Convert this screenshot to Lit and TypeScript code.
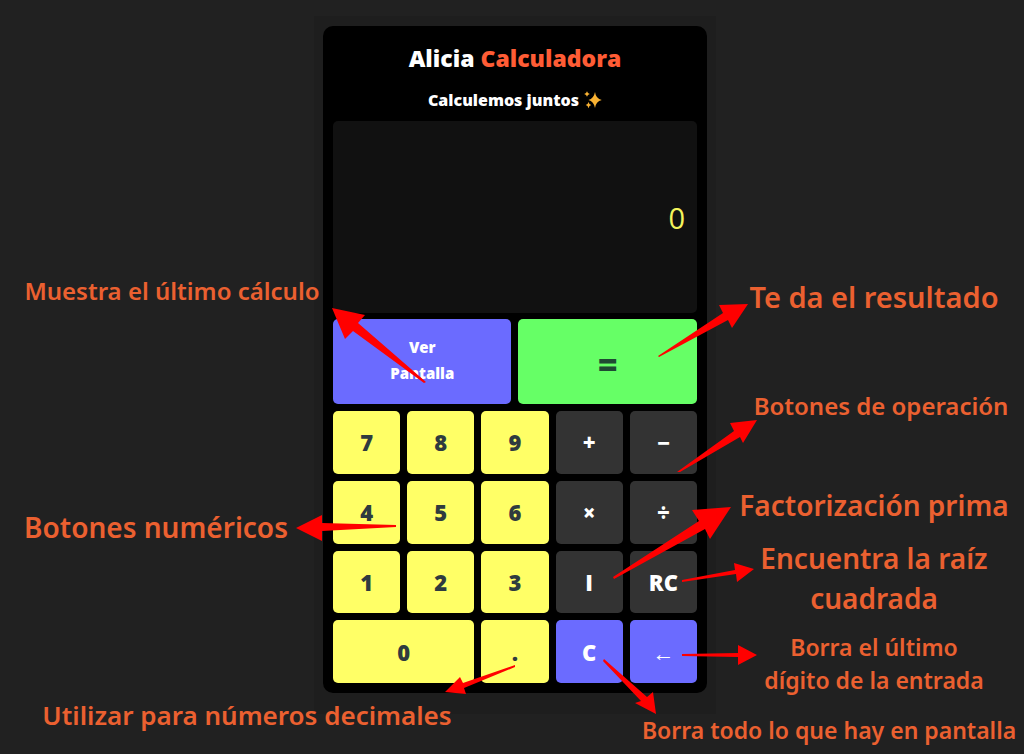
import { LitElement, html, svg, css } from "lit";
import { customElement, state } from "lit/decorators.js";

interface Note {
  lines: string[];
  x: number;
  y: number;
  size: "xs" | "s" | "m" | "l" | "xl";
}

interface Key {
  label: string;
  kind: string;
  name?: string;
}

// Note centres, measured from the top left corner of the annotated frame.
const NOTES: Note[] = [
  { lines: ["Muestra el último cálculo"], x: -142, y: 274, size: "s" },
  { lines: ["Te da el resultado"], x: 560, y: 281, size: "xl" },
  { lines: ["Botones de operación"], x: 567, y: 389, size: "s" },
  { lines: ["Factorización prima"], x: 560, y: 489, size: "l" },
  { lines: ["Encuentra la raíz", "cuadrada"], x: 560, y: 562, size: "l" },
  { lines: ["Borra el último", "dígito de la entrada"], x: 560, y: 648, size: "xs" },
  { lines: ["Borra todo lo que hay en pantalla"], x: 515, y: 714, size: "xs" },
  { lines: ["Utilizar para números decimales"], x: -67, y: 699, size: "m" },
  { lines: ["Botones numéricos"], x: -158, y: 511, size: "l" },
];

// Arrow outlines in the same coordinate system as the notes.
const ARROWS: string[] = [
  "M112 366L110 367L39 315L31 323L18 292L51 299L44 307Z",
  "M344 340L345 341L414 304L418 312L434 288L405 289L409 297Z",
  "M363 456L366 456L426 421L429 427L443 404L416 407L420 415Z",
  "M299 561L300 563L391 513L396 523L417 491L378 494L385 505Z",
  "M368 564L368 566L422 558L423 566L440 553L420 547L421 554Z",
  "M368 638L368 640L424 641L424 649L443 639L424 629L424 637Z",
  "M290 643L289 645L327 685L321 687L342 698L339 676L333 681Z",
  "M201 649L201 651L150 672L152 678L131 676L146 661L149 667Z",
  "M82 509L82 511L8 515L8 525L-18 512L8 499L8 507Z",
];

const KEYS: Key[] = [
  { label: "Ver Pantalla", kind: "action view" },
  { label: "=", kind: "equals", name: "Igual" },
  ...["7", "8", "9"].map((label) => ({ label, kind: "digit" })),
  { label: "+", kind: "op", name: "Sumar" },
  { label: "−", kind: "op", name: "Restar" },
  ...["4", "5", "6"].map((label) => ({ label, kind: "digit" })),
  { label: "×", kind: "op", name: "Multiplicar" },
  { label: "÷", kind: "op", name: "Dividir" },
  ...["1", "2", "3"].map((label) => ({ label, kind: "digit" })),
  { label: "I", kind: "op", name: "Factorización prima" },
  { label: "RC", kind: "op", name: "Raíz cuadrada" },
  { label: "0", kind: "digit wide" },
  { label: ".", kind: "digit", name: "Punto decimal" },
  { label: "C", kind: "action", name: "Borrar todo" },
  { label: "←", kind: "action back", name: "Borrar último dígito" },
];

@customElement("alicia-calculator")
export class AliciaCalculator extends LitElement {
  @state() private value = "0";

  static styles = css`
    :host {
      display: block;
      padding: 11px 10px 10px;
      border-radius: 10px;
      background: #000;
      color: #fff;
      font-family: "Open Sans", "Noto Sans", sans-serif;
      font-weight: 800;
      text-align: center;
    }
    .title {
      margin: 0;
      font-size: 23px;
      line-height: 42px;
      font-weight: 800;
    }
    .accent {
      color: #ff5c35;
    }
    .subtitle {
      display: flex;
      justify-content: center;
      align-items: center;
      gap: 5px;
      margin: 0;
      font-size: 16px;
      line-height: 42px;
    }
    .spark {
      width: 18px;
      height: 18px;
      fill: #f9b233;
    }
    .screen {
      display: flex;
      align-items: center;
      justify-content: flex-end;
      box-sizing: border-box;
      height: 192px;
      padding: 0 12px;
      border-radius: 5px;
      background: #111;
      color: #f4f45c;
      font-size: 29px;
      font-weight: 400;
    }
    .keys {
      display: grid;
      grid-template-columns: repeat(5, minmax(0, 1fr));
      grid-template-rows: 85px repeat(4, 1fr);
      gap: 7px;
      height: 364px;
      margin-top: 6px;
    }
    .top {
      grid-column: 1 / -1;
      display: grid;
      grid-template-columns: 1fr 1fr;
      gap: 7px;
    }
    .key {
      padding: 0;
      border: 0;
      border-radius: 5px;
      font: inherit;
      font-size: 22px;
      cursor: pointer;
    }
    .digit {
      background: #ffff66;
      color: #2f3b3f;
    }
    .op {
      background: #333;
      color: #fff;
    }
    .action {
      background: #6b6bff;
      color: #fff;
    }
    .equals {
      padding-top: 4px;
      background: #66ff66;
      color: #1f4a33;
      font-size: 34px;
    }
    .wide {
      grid-column: span 2;
    }
    .view {
      padding: 0 50px 3px;
      font-size: 15px;
      line-height: 26px;
    }
    .back {
      font-weight: 400;
    }
  `;

  private press(label: string) {
    if (label === "C") this.value = "0";
    else if (label === "←") this.value = this.value.slice(0, -1) || "0";
    else if (/^\d$/.test(label)) this.value = this.value === "0" ? label : this.value + label;
    else if (label === "." && !this.value.includes(".")) this.value += ".";
  }

  private key(k: Key) {
    return html`<button
      class="key ${k.kind}"
      type="button"
      aria-label=${k.name ?? k.label}
      @click=${() => this.press(k.label)}
    >${k.label}</button>`;
  }

  render() {
    return html`
      <h1 class="title">Alicia <span class="accent">Calculadora</span></h1>
      <p class="subtitle">
        Calculemos juntos
        <svg class="spark" viewBox="0 0 18 18" aria-hidden="true">
          <path d="M11 1Q11.800 7.500 17.800 9Q11.800 10.500 11 17Q9.800 10.500 4.500 9Q9.800 7.500 11 1Z" />
          <path d="M3 .2Q3.500 2.500 5.800 3Q3.500 3.500 3 5.800Q2.500 3.500 .2 3Q2.500 2.500 3 .2Z" />
          <path d="M4.500 11Q5 13.500 7.300 14Q5 14.500 4.500 17.300Q4 14.500 1.700 14Q4 13.500 4.500 11Z" />
        </svg>
      </p>
      <output class="screen">${this.value}</output>
      <div class="keys">
        <div class="top">${KEYS.slice(0, 2).map((k) => this.key(k))}</div>
        ${KEYS.slice(2).map((k) => this.key(k))}
      </div>
    `;
  }
}

@customElement("app-root")
export class AppRoot extends LitElement {
  static styles = css`
    :host {
      display: flex;
      justify-content: center;
      align-items: flex-start;
      box-sizing: border-box;
      min-height: 100vh;
      padding: 16px 0 16px 6px;
      overflow: hidden;
      background: #212121;
    }
    .frame {
      position: relative;
      box-sizing: border-box;
      width: 402px;
      padding: 10px 9px 21px;
      background: #1e1e1e;
    }
    .arrows {
      position: absolute;
      inset: 0;
      width: 100%;
      height: 100%;
      overflow: visible;
      pointer-events: none;
      fill: #ff0000;
    }
    .note {
      position: absolute;
      margin: 0;
      transform: translate(-50%, -50%);
      color: #eb6030;
      font-family: "Noto Sans", "Open Sans", sans-serif;
      font-weight: 600;
      text-align: center;
      white-space: nowrap;
      pointer-events: none;
    }
    .line {
      display: block;
    }
    .xs {
      font-size: 23px;
      line-height: 33px;
    }
    .s {
      font-size: 24px;
      line-height: 33px;
    }
    .m {
      font-size: 26px;
      line-height: 36px;
    }
    .l {
      font-size: 28px;
      line-height: 40px;
    }
    .xl {
      font-size: 29px;
      line-height: 40px;
    }
  `;

  render() {
    return html`
      <main class="frame">
        <alicia-calculator></alicia-calculator>
        ${NOTES.map(
          (n) => html`<p class="note ${n.size}" style="left:${n.x}px;top:${n.y}px">
            ${n.lines.map((line) => html`<span class="line">${line}</span>`)}
          </p>`
        )}
        <svg class="arrows" aria-hidden="true">${ARROWS.map((d) => svg`<path d=${d} />`)}</svg>
      </main>
    `;
  }
}
